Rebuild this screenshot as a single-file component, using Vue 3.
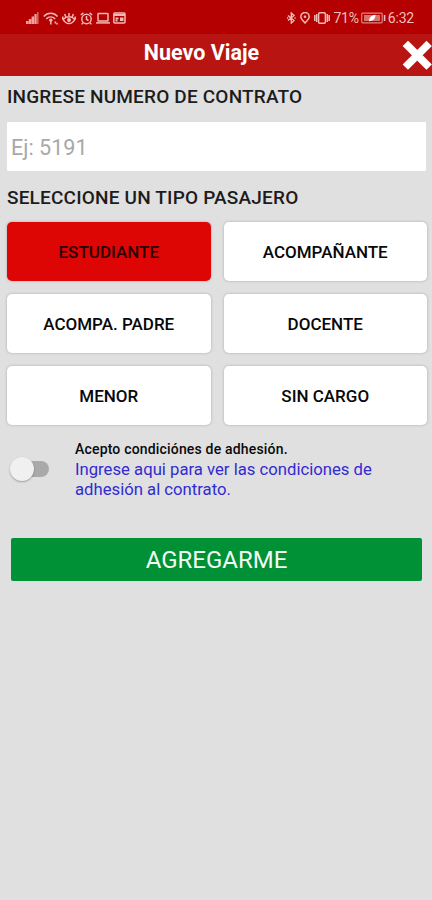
<template>
  <div class="screen">
    <div class="status">
      <div class="status__icons">
        <svg class="icon icon--signal" width="13" height="12" viewBox="0 0 13 12" aria-hidden="true">
          <path d="M0 9h2.500v3H0zM2.800 7h2.500v5H2.800zM5.600 4.500h2.500V12H5.600zM8.400 2h2.300v10H8.400z" fill="#eda3a0" />
          <path d="M11 0h1.600v12H11z" fill="#d4625f" />
        </svg>
        <svg class="icon icon--wifi" width="16" height="13" viewBox="0 0 16 13" aria-hidden="true">
          <path d="M.8 4.500C4.500.2 10.800.2 14.500 4.500M3.200 7c2.700-2.600 6.300-2.600 9 0" />
          <circle cx="7.800" cy="8.300" r="1.700" fill="#f3b9b5" stroke="none" />
          <path d="M7.800 10v2.500M12.300 9.500v2M14 10.800v1.700" />
        </svg>
        <svg class="icon icon--eye" width="14" height="13" viewBox="0 0 14 13" aria-hidden="true">
          <path d="M1.200 7.500c3-3.600 8.600-3.600 11.600 0-2.800 5.400-8.800 5.400-11.600 0ZM7 1v3.500M2.600 2l1.200 2.800M11.400 2l-1.200 2.800M.8 4.500v3M13.200 4.500v3" />
          <circle cx="7" cy="7.900" r="2" fill="#f3b9b5" stroke="none" />
        </svg>
        <svg class="icon icon--alarm" width="13" height="13" viewBox="0 0 13 13" aria-hidden="true">
          <circle cx="6.500" cy="7" r="4.700" />
          <path d="M.8 3 3.400.9M12.200 3 9.600.9M6.500 4v3.300l2 1.200M3 10.800l-1.300 1.600M10 10.800l1.300 1.600" />
        </svg>
        <svg class="icon icon--laptop" width="14" height="12" viewBox="0 0 14 12" aria-hidden="true">
          <rect x="2" y="1.500" width="10" height="7.500" rx=".6" />
          <path d="M0 10.900h14" />
        </svg>
        <svg class="icon" width="13" height="12" viewBox="0 0 13 12" aria-hidden="true">
          <rect x=".8" y="1" width="11.200" height="10" rx="1" />
          <path d="M1 3h11M2.500 6.300h3M2.500 8.500h2" stroke-width="1.800" />
          <path d="M7 5.500h3.500V9H7z" fill="#f3b9b5" stroke="none" />
        </svg>
      </div>
      <div class="status__icons">
        <svg class="icon icon--bt" width="9" height="12" viewBox="0 0 9 12" aria-hidden="true">
          <path d="m1 3.500 6 5L4.300 11V1L7 3.500l-6 5M0 6h1.200M7.500 6h1.200" stroke-width="1.400" />
        </svg>
        <svg class="icon icon--pin" width="10" height="12" viewBox="0 0 10 12" aria-hidden="true">
          <path d="M5 11C2.700 8.500.8 6.800.8 4.700a4.200 4.200 0 0 1 8.400 0C9.200 6.800 7.300 8.500 5 11Z" />
          <circle cx="5" cy="4.800" r="1.300" fill="#f3b9b5" stroke="none" />
        </svg>
        <svg class="icon icon--vibrate" width="16" height="12" viewBox="0 0 16 12" aria-hidden="true">
          <rect x="4.600" y=".8" width="6.800" height="10.400" rx="1.200" />
          <path d="M2.700 2v8M13.300 2v8M.8 3v6M15.200 3v6" stroke-width="1.500" />
        </svg>
        <span class="status__text status__battery">71%</span>
        <svg class="icon icon--battery" width="25" height="12" viewBox="0 0 25 12" aria-hidden="true">
          <rect x=".7" y="1.200" width="20.500" height="9.600" rx="1" stroke="#dc8683" stroke-width="1.200" />
          <path d="M3 3h16v6H3z" fill="#d97370" stroke="none" />
          <path d="M14.500 2.800c-4 .5-6.500 3-6.500 6.400 4 0 6.500-2.400 6.500-6.400Z" fill="#fff" stroke="none" />
          <path d="M23.600 3v6" stroke-width="1.600" />
        </svg>
        <span class="status__text">6:32</span>
      </div>
    </div>

    <header class="header">
      <h1 class="header__title">Nuevo Viaje</h1>
      <button class="header__close" type="button" aria-label="Cerrar">
        <svg width="31" height="32" viewBox="0 0 31 32" aria-hidden="true">
          <path d="m7 7 18.500 18.500M25.500 7 7 25.500" stroke="#fff" stroke-width="7.600" stroke-linecap="square" />
        </svg>
      </button>
    </header>

    <main class="content">
      <label class="label" for="contrato">INGRESE NUMERO DE CONTRATO</label>
      <input id="contrato" v-model="contrato" class="input" type="text" placeholder="Ej: 5191" />

      <h2 class="label label--tipo">SELECCIONE UN TIPO PASAJERO</h2>
      <div class="tipos">
        <button
          v-for="tipo in tipos"
          :key="tipo"
          type="button"
          class="tipo"
          :class="{ 'tipo--activo': tipo === seleccionado }"
          @click="seleccionado = tipo"
        >
          {{ tipo }}
        </button>
      </div>

      <div class="adhesion">
        <button
          type="button"
          class="switch"
          :class="{ 'switch--on': acepto }"
          role="switch"
          :aria-checked="acepto"
          aria-label="Acepto"
          @click="acepto = !acepto"
        >
          <span class="switch__thumb"></span>
        </button>
        <div class="adhesion__texto">
          <p class="adhesion__titulo">Acepto condiciónes de adhesión.</p>
          <a class="adhesion__link" href="#">Ingrese aqui para ver las condiciones de<br />adhesión al contrato.</a>
        </div>
      </div>

      <button class="agregar" type="button">AGREGARME</button>
    </main>
  </div>
</template>

<script setup>
import { ref } from 'vue'

const tipos = ['ESTUDIANTE', 'ACOMPAÑANTE', 'ACOMPA. PADRE', 'DOCENTE', 'MENOR', 'SIN CARGO']

const contrato = ref('')
const seleccionado = ref('ESTUDIANTE')
const acepto = ref(false)
</script>

<style>
body {
  margin: 0;
  background: #e0e0e0;
}
</style>

<style scoped>
.screen {
  width: 432px;
  height: 900px;
  overflow: hidden;
  background: #e0e0e0;
  font-family: Roboto, "Liberation Sans", sans-serif;
}

button {
  border: 0;
  padding: 0;
  font-family: inherit;
  cursor: pointer;
}

.status {
  display: flex;
  justify-content: space-between;
  align-items: center;
  box-sizing: border-box;
  height: 34px;
  padding: 2px 18px 0 26px;
  background: #b40000;
}

.status__icons {
  display: flex;
  align-items: center;
}

.icon {
  flex: none;
  fill: none;
  stroke: #f3b9b5;
  stroke-width: 1.5;
}

.icon--signal { margin-right: 4px; stroke: none; }
.icon--wifi { margin-right: 3px; }
.icon--eye { margin-right: 4px; }
.icon--alarm { margin-right: 3px; }
.icon--laptop { margin-right: 3px; }
.icon--bt { margin-right: 4px; }
.icon--pin { margin-right: 4px; }
.icon--vibrate { margin-right: 3px; }
.icon--battery { margin-right: 2px; }

.status__text {
  color: #f3bfbb;
  font-size: 14px;
  letter-spacing: -.2px;
  line-height: 16px;
}

.status__battery {
  margin-right: 2px;
}

.header {
  display: grid;
  grid-template-columns: 30px 1fr 31px;
  align-items: center;
  height: 42px;
  background: #b71412;
}

.header__title {
  grid-column: 2;
  margin: 0 0 4px;
  padding-right: 28px;
  color: #fff;
  font-size: 21.5px;
  font-weight: 700;
  line-height: 26px;
  text-align: center;
}

.header__close {
  width: 31px;
  height: 32px;
  background: none;
}

.header__close svg {
  display: block;
}

.content {
  padding: 9px 5px 0 7px;
}

.label {
  display: block;
  margin: 0;
  color: #1c1c1c;
  font-size: 19px;
  font-weight: 500;
  letter-spacing: .19px;
  line-height: 24px;
}

.label--tipo {
  padding-top: 1px;
}

.input {
  display: block;
  box-sizing: border-box;
  width: 419px;
  height: 49px;
  margin: 13px 0 14px;
  padding: 2px 4px 0;
  border: 0;
  border-radius: 1px;
  background: #fff;
  font-family: inherit;
  font-size: 21.6px;
}

.input::placeholder {
  color: #a8a8a8;
}

.tipos {
  display: grid;
  grid-template-columns: 1fr 1fr;
  grid-auto-rows: 59px;
  gap: 13px;
  margin-top: 12px;
}

.tipo {
  border-radius: 5px;
  background: #fff;
  box-shadow: 0 0 2px 1px #c6c6c6;
  color: #080808;
  font-size: 17px;
  font-weight: 500;
}

.tipo--activo {
  background: #de0505;
  color: #2b0000;
}

.adhesion {
  display: flex;
  margin-top: 15px;
}

.switch {
  display: flex;
  align-items: center;
  width: 34px;
  height: 16px;
  margin: 21px 26px 0 8px;
  border-radius: 8px;
  background: #a9a9a9;
}

.switch__thumb {
  width: 24px;
  height: 24px;
  margin-left: -5px;
  border-radius: 50%;
  background: #f0f0f0;
  box-shadow: 0 1px 2px rgba(0, 0, 0, .3);
}

.switch--on {
  justify-content: flex-end;
  background: #7fc795;
}

.adhesion__titulo {
  margin: 0;
  color: #0a0a0a;
  font-size: 14px;
  font-weight: 500;
  letter-spacing: .18px;
  line-height: 18px;
}

.adhesion__link {
  display: block;
  padding-top: 2px;
  color: #322bd0;
  font-size: 16.7px;
  line-height: 20px;
  text-decoration: none;
}

.agregar {
  display: block;
  width: 411px;
  height: 43px;
  margin: 38px 0 0 4px;
  border-radius: 2px;
  background: #009036;
  color: #f2fbf4;
  font-size: 24px;
}
</style>
